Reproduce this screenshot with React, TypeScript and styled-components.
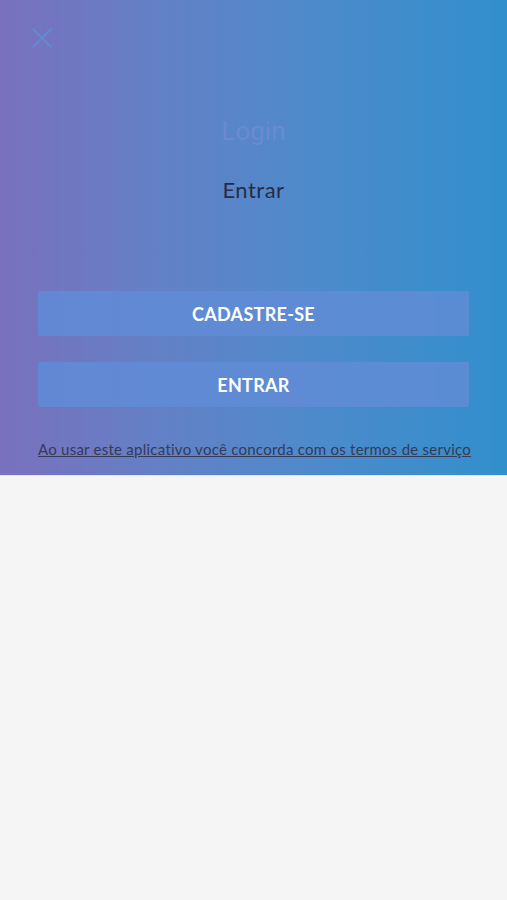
import React from 'react'
import styled, { createGlobalStyle } from 'styled-components'

const GlobalStyle = createGlobalStyle`
  html, body {
    margin: 0;
    padding: 0;
    background: #f5f5f5;
  }
`

const Page = styled.div`
  width: 507px;
  min-height: 900px;
  background: #f5f5f5;
  font-family: 'Lato', 'Open Sans', sans-serif;
`

const Hero = styled.section`
  height: 476px;
  box-sizing: border-box;
  padding: 20px 38px 0;
  background: linear-gradient(90deg, #7a70bd 0%, #6480c6 30%, #4f8acb 60%, #318fcb 100%);
  border-bottom: 1px solid #dfe7f0;
  display: flex;
  flex-direction: column;
`

const CloseButton = styled.button`
  align-self: flex-start;
  margin-left: -14px;
  width: 36px;
  height: 36px;
  padding: 0;
  border: 0;
  background: transparent;
  opacity: 0.6;
  display: flex;
  align-items: center;
  justify-content: center;
`

const Title = styled.h1`
  margin: 60px 0 0;
  text-align: center;
  font-family: 'Liberation Sans Narrow', 'Roboto', sans-serif;
  font-weight: 400;
  font-size: 26px;
  line-height: 30px;
  color: #6a8ad3;
`

const Subtitle = styled.h2`
  margin: 30px 0 0;
  text-align: center;
  font-weight: 400;
  font-size: 22px;
  line-height: 28px;
  letter-spacing: 0.5px;
  color: #262c48;
`

const Actions = styled.div`
  margin-top: 87px;
  display: flex;
  flex-direction: column;
  gap: 26px;
`

const ActionButton = styled.button`
  height: 45px;
  border: 0;
  border-radius: 2px;
  background: rgba(96, 140, 214, 0.85);
  color: #ffffff;
  font-family: 'Lato', sans-serif;
  font-weight: 700;
  font-size: 18px;
  letter-spacing: 0.3px;
`

const Terms = styled.a`
  margin-top: 32px;
  text-align: center;
  font-size: 15px;
  line-height: 20px;
  letter-spacing: 0.25px;
  color: #343a58;
  text-decoration: underline;
  white-space: nowrap;
`

export default function App() {
  return (
    <Page>
      <GlobalStyle />
      <Hero>
        <CloseButton aria-label="Fechar">
          <svg width="26" height="26" viewBox="0 0 24 24" fill="none" stroke="#5f94dc" strokeWidth="2.2" strokeLinecap="round">
            <path d="M4 4 L20 20 M20 4 L4 20" />
          </svg>
        </CloseButton>
        <Title>Login</Title>
        <Subtitle>Entrar</Subtitle>
        <Actions>
          <ActionButton>CADASTRE-SE</ActionButton>
          <ActionButton>ENTRAR</ActionButton>
        </Actions>
        <Terms>Ao usar este aplicativo você concorda com os termos de serviço</Terms>
      </Hero>
    </Page>
  )
}
